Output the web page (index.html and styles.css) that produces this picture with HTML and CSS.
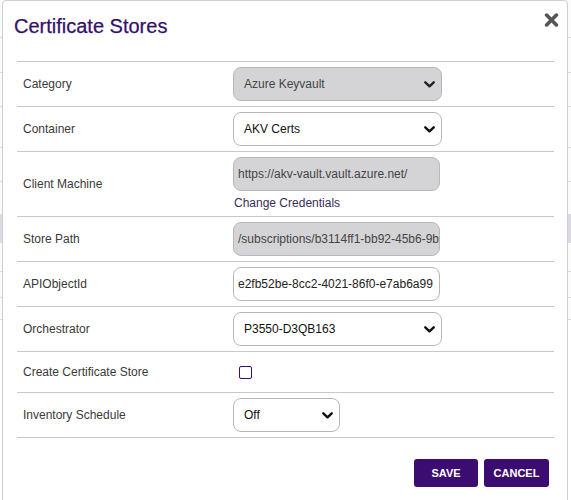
FILE: index.html
```html
<!DOCTYPE html>
<html lang="en">
<head>
<meta charset="utf-8">
<title>Certificate Stores</title>
<link rel="stylesheet" href="styles.css">
</head>
<body>
<div class="page">
  <div class="bg-row h38"></div>
  <div class="bg-row h35"></div>
  <div class="bg-row h34"></div>
  <div class="bg-row h41"></div>
  <div class="bg-row h34"></div>
  <div class="bg-row h33"></div>
  <div class="bg-row h28 selected"></div>
  <div class="bg-row h29"></div>
  <div class="bg-row h26"></div>
  <div class="bg-row h22"></div>
</div>

<div class="modal" role="dialog" aria-label="Certificate Stores">
  <div class="modal-header">
    <h1 class="modal-title">Certificate Stores</h1>
    <button class="close" aria-label="Close">
      <svg width="15" height="14" viewBox="0 0 15 14">
        <path d="M2.6 2.1 L12.4 11.9 M12.4 2.1 L2.6 11.9" stroke="#555" stroke-width="3.6" stroke-linecap="round" fill="none"/>
      </svg>
    </button>
  </div>

  <div class="form">
    <div class="row">
      <div class="label">Category</div>
      <div class="control">
        <div class="select disabled w209"><span>Azure Keyvault</span>
          <svg class="chev" width="11" height="7" viewBox="0 0 11 7"><path d="M1.3 1.3 L5.5 5.3 L9.7 1.3" stroke="#222" stroke-width="2.4" fill="none" stroke-linecap="round" stroke-linejoin="round"/></svg>
        </div>
      </div>
    </div>
    <div class="row">
      <div class="label">Container</div>
      <div class="control">
        <div class="select w209"><span>AKV Certs</span>
          <svg class="chev" width="11" height="7" viewBox="0 0 11 7"><path d="M1.3 1.3 L5.5 5.3 L9.7 1.3" stroke="#111" stroke-width="2.4" fill="none" stroke-linecap="round" stroke-linejoin="round"/></svg>
        </div>
      </div>
    </div>
    <div class="row">
      <div class="label">Client Machine</div>
      <div class="control">
        <input class="input disabled" type="text" value="https://akv-vault.vault.azure.net/" disabled>
        <a class="link">Change Credentials</a>
      </div>
    </div>
    <div class="row">
      <div class="label">Store Path</div>
      <div class="control">
        <input class="input disabled" type="text" value="/subscriptions/b3114ff1-bb92-45b6-9b" disabled>
      </div>
    </div>
    <div class="row">
      <div class="label">APIObjectId</div>
      <div class="control">
        <input class="input" type="text" value="e2fb52be-8cc2-4021-86f0-e7ab6a99">
      </div>
    </div>
    <div class="row">
      <div class="label">Orchestrator</div>
      <div class="control">
        <div class="select w209"><span>P3550-D3QB163</span>
          <svg class="chev" width="11" height="7" viewBox="0 0 11 7"><path d="M1.3 1.3 L5.5 5.3 L9.7 1.3" stroke="#111" stroke-width="2.4" fill="none" stroke-linecap="round" stroke-linejoin="round"/></svg>
        </div>
      </div>
    </div>
    <div class="row">
      <div class="label">Create Certificate Store</div>
      <div class="control check-cell">
        <span class="checkbox"></span>
      </div>
    </div>
    <div class="row last">
      <div class="label">Inventory Schedule</div>
      <div class="control">
        <div class="select w107"><span>Off</span>
          <svg class="chev" width="11" height="7" viewBox="0 0 11 7"><path d="M1.3 1.3 L5.5 5.3 L9.7 1.3" stroke="#111" stroke-width="2.4" fill="none" stroke-linecap="round" stroke-linejoin="round"/></svg>
        </div>
      </div>
    </div>
  </div>

  <div class="footer">
    <button class="btn save">SAVE</button>
    <button class="btn cancel">CANCEL</button>
  </div>
</div>
</body>
</html>
```

FILE: styles.css
```css
* { box-sizing: border-box; }

html, body {
  margin: 0;
  padding: 0;
}

body {
  width: 571px;
  height: 500px;
  overflow: hidden;
  background: #fff;
  font-family: "Liberation Sans", Arial, sans-serif;
  position: relative;
}

.page {
  display: flex;
  flex-direction: column;
}

.bg-row {
  border-bottom: 1px solid #dcdcdc;
  background: #fbfbfb;
}
.bg-row.selected { background: #dcd8e6; }
.h38 { height: 38px; }
.h35 { height: 35px; }
.h34 { height: 34px; }
.h41 { height: 41px; }
.h33 { height: 33px; }
.h28 { height: 28px; }
.h29 { height: 29px; }
.h26 { height: 26px; }
.h22 { height: 22px; }

.modal {
  position: absolute;
  left: 2px;
  top: 0;
  width: 566px;
  background: #fff;
  border: 1px solid #cfcfcf;
  border-radius: 4px;
  padding-bottom: 30px;
}

.modal-header {
  display: flex;
  justify-content: space-between;
  align-items: flex-start;
  padding: 13px 8px 0 11px;
}

.modal-title {
  margin: 0;
  font-size: 20px;
  line-height: 24px;
  font-weight: normal;
  color: #35106a;
  -webkit-text-stroke: 0.25px #35106a;
}

.close {
  border: 0;
  background: none;
  padding: 0;
  margin-top: -1px;
  display: block;
  line-height: 0;
}

.form {
  margin: 23px 13px 0 14px;
}

.row {
  display: grid;
  grid-template-columns: 216px 1fr;
  align-items: center;
  border-top: 1px solid #c8c8c8;
  padding: 5px 0;
}
.row.last { border-bottom: 1px solid #c8c8c8; }

.label {
  padding-left: 6px;
  font-size: 12px;
  color: #3a3a3a;
}

.control {
  display: flex;
  flex-direction: column;
  align-items: flex-start;
}

.select {
  height: 34px;
  border: 1px solid #b8b8b8;
  border-radius: 8px;
  background: #fff;
  display: flex;
  align-items: center;
  justify-content: space-between;
  padding: 0 6px 0 10px;
  font-size: 12px;
  color: #111;
}
.select.disabled {
  background: #d4d4d6;
  color: #444;
}
.w209 { width: 209px; }
.w107 { width: 107px; }

.chev { display: block; }

.input {
  width: 207px;
  height: 34px;
  border: 1px solid #b8b8b8;
  border-radius: 8px;
  background: #fff;
  padding: 0 0 0 4px;
  font-family: "Liberation Sans", Arial, sans-serif;
  font-size: 12px;
  color: #222;
  outline: none;
}
.input.disabled {
  background: #d4d4d6;
  color: #444;
}

.link {
  margin-top: 4px;
  padding-left: 1px;
  font-size: 12px;
  line-height: 16px;
  color: #3b2c58;
}

.check-cell {
  height: 30px;
  justify-content: center;
}

.checkbox {
  display: block;
  width: 13px;
  height: 13px;
  margin-left: 6px;
  border: 1.5px solid #3c0d70;
  border-radius: 2px;
  background: #fff;
}

.footer {
  display: flex;
  justify-content: flex-end;
  gap: 6px;
  margin: 21px 18px 0 0;
}

.btn {
  height: 28px;
  border: 0;
  border-radius: 3px;
  background: #3c0d70;
  color: #fff;
  font-family: "Liberation Sans", Arial, sans-serif;
  font-size: 11px;
  font-weight: bold;
  padding: 0;
  text-align: center;
}
.save { width: 64px; }
.cancel { width: 65px; }
```
